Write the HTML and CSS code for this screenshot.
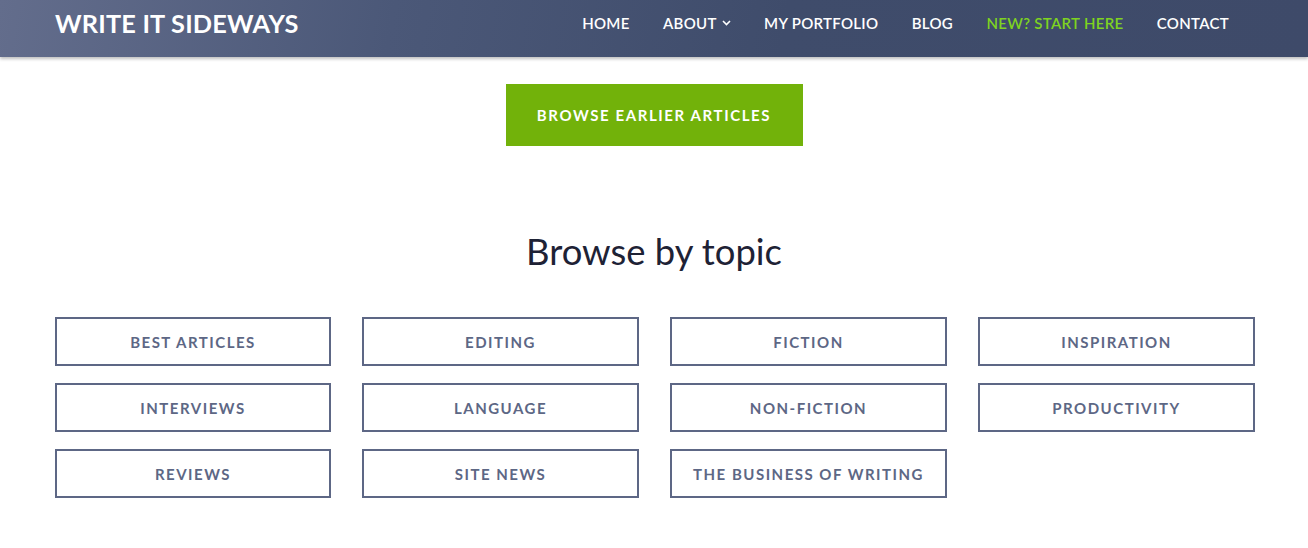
FILE: index.html
```
<!DOCTYPE html>
<html lang="en">
<head>
<meta charset="utf-8">
<title>Write It Sideways</title>
<link rel="stylesheet" href="styles.css">
</head>
<body>
<header class="site-header">
  <div class="header-inner">
    <a class="logo" href="#">WRITE IT SIDEWAYS</a>
    <nav class="nav">
      <a href="#" class="nav-item">HOME</a>
      <a href="#" class="nav-item">ABOUT <svg class="chev" width="9" height="6" viewBox="0 0 9 6"><path d="M1 1l3.5 3.5L8 1" fill="none" stroke="currentColor" stroke-width="1.6"/></svg></a>
      <a href="#" class="nav-item">MY PORTFOLIO</a>
      <a href="#" class="nav-item">BLOG</a>
      <a href="#" class="nav-item nav-green">NEW? START HERE</a>
      <a href="#" class="nav-item">CONTACT</a>
    </nav>
  </div>
</header>
<main class="main">
  <div class="btn-wrap"><a href="#" class="btn">BROWSE EARLIER ARTICLES</a></div>
  <h2 class="topic-title">Browse by topic</h2>
  <div class="topics">
    <a href="#" class="topic">BEST ARTICLES</a>
    <a href="#" class="topic">EDITING</a>
    <a href="#" class="topic">FICTION</a>
    <a href="#" class="topic">INSPIRATION</a>
    <a href="#" class="topic">INTERVIEWS</a>
    <a href="#" class="topic">LANGUAGE</a>
    <a href="#" class="topic">NON-FICTION</a>
    <a href="#" class="topic">PRODUCTIVITY</a>
    <a href="#" class="topic">REVIEWS</a>
    <a href="#" class="topic">SITE NEWS</a>
    <a href="#" class="topic">THE BUSINESS OF WRITING</a>
  </div>
</main>
</body>
</html>
```
FILE: styles.css
```
* { box-sizing: border-box; }
html, body { margin: 0; padding: 0; background: #fff; }
body { font-family: Lato, "Open Sans", sans-serif; }
a { text-decoration: none; }

.site-header {
  height: 57px;
  background: linear-gradient(100deg, #636d8c 0%, #4b5878 30%, #3f4c6b 60%, #3e4a69 100%);
  box-shadow: 0 2px 3px rgba(0,0,0,0.25);
  position: relative;
  z-index: 2;
}
.header-inner {
  width: 1200px;
  margin: 0 auto;
  height: 100%;
  display: flex;
  align-items: center;
  justify-content: space-between;
  padding-left: 1px;
  padding-bottom: 12px;
}
.logo {
  color: #fff;
  font-weight: 700;
  font-size: 25.3px;
  letter-spacing: 0.2px;
}
.nav { display: flex; gap: 33.4px; padding-right: 25px; padding-top: 0; }
.nav-item {
  color: #fff;
  font-size: 15px;
  font-weight: 600;
  letter-spacing: 0.3px;
  display: flex;
  align-items: center;
  gap: 5px;
}
.chev { margin-top: 1px; }
.nav-green { color: #7ed321; }

.main { width: 1200px; margin: 0 auto; padding-top: 27px; }
.btn-wrap { display: flex; justify-content: center; }
.btn {
  display: inline-flex;
  align-items: center;
  justify-content: center;
  width: 297px;
  height: 62px;
  background: #72b20a;
  color: #fff;
  font-weight: 700;
  font-size: 15px;
  letter-spacing: 1.6px;
}
.topic-title {
  margin: 83px 0 0;
  text-align: center;
  font-weight: 400;
  font-size: 36.4px;
  color: #1e2235;
  line-height: 44px;
}
.topics {
  margin-top: 44px;
  display: grid;
  grid-template-columns: 276px repeat(3, 277px);
  column-gap: 31px;
  row-gap: 17px;
  padding-left: 1px;
}
.topic {
  height: 49px;
  border: 2px solid #5d6785;
  display: flex;
  align-items: center;
  justify-content: center;
  color: #5d6785;
  font-weight: 700;
  font-size: 15px;
  letter-spacing: 1.5px;
}
```
